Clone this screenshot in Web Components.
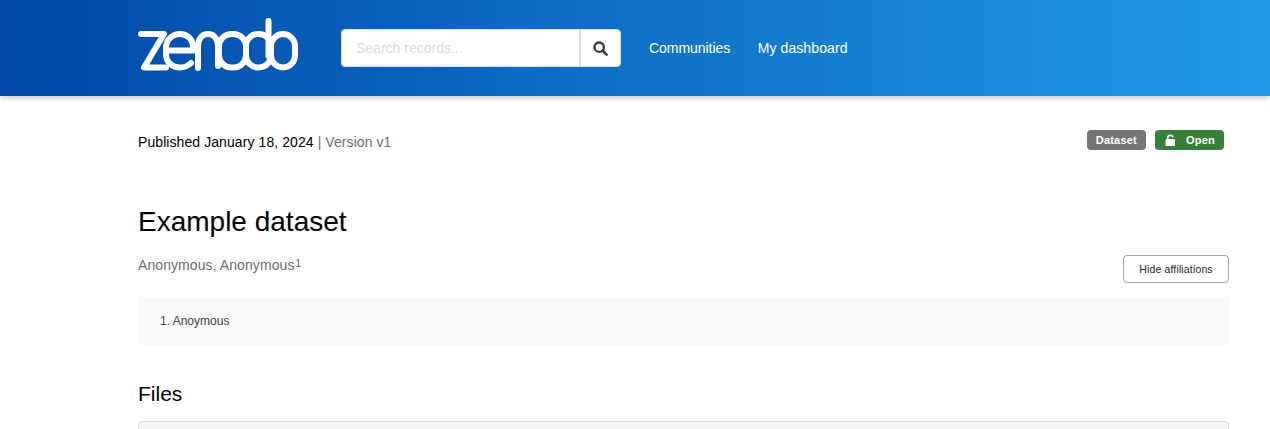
<!DOCTYPE html>
<html lang="en">
<head>
<meta charset="utf-8">
<title>Example dataset</title>
<style>
html,body{margin:0;padding:0;height:429px;overflow:hidden;background:#fff}
body{font-family:"Liberation Sans",Arial,sans-serif;color:#000;font-size:14px}
</style>
</head>
<body>
<zen-header></zen-header>
<zen-record>
  <zen-meta slot="meta" date="Published January 18, 2024" version="Version v1">
    <zen-badge tone="grey">Dataset</zen-badge>
    <zen-badge tone="green" lock>Open</zen-badge>
  </zen-meta>
  <span slot="title">Example dataset</span>
  <zen-creators slot="creators"></zen-creators>
  <span slot="files">Files</span>
</zen-record>
<script>
function def(name, css, html){
  customElements.define(name, class extends HTMLElement{
    constructor(){super();const r=this.attachShadow({mode:'open'});r.innerHTML='<style>'+css+'</style>'+(typeof html==='function'?html(this):html);}
  });
}
def('zen-logo', ':host{display:block;width:160px;height:54px}svg{display:block}',
`<svg width="160" height="54" viewBox="138 18 160 54" fill="none" stroke="#fff" stroke-width="6" stroke-linecap="round" stroke-linejoin="round" aria-label="zenodo">
<path d="M141 34H164L144 67.500H166"/>
<path d="M166 50.500H193V47C193 39 187 34 180 34C172 34 166 40 166 48V54C166 62 172 67.500 180 67.500C184 67.500 188 66 191 63"/>
<path d="M198 68V46C198 39 202 34 208 34C214 34 218 39 218 46V66"/>
<rect x="219" y="34" width="27" height="33.500" rx="12.500"/>
<rect x="246" y="34" width="25" height="33.500" rx="12"/>
<path d="M268.500 21V56"/>
<rect x="271" y="34" width="24" height="33.500" rx="12"/>
</svg>`);
def('zen-search',
`:host{display:flex;width:280px;height:38px;box-sizing:border-box;background:#fff;border:1px solid #dedede;border-radius:4px;font-size:14px}
.in{flex:1;display:flex;align-items:center;padding-left:14px;color:#dcdcdc}
.btn{width:41px;display:flex;align-items:center;justify-content:center;border-left:2px solid #dedede;box-sizing:border-box}`,
`<div class="in">Search records...</div><div class="btn"><svg width="15" height="15" viewBox="0 0 15 15" fill="none" stroke="#3d3d3d"><circle cx="6.200" cy="6.200" r="4.700" stroke-width="2.400"/><path d="M9.800 9.800L13.600 13.600" stroke-width="2.700" stroke-linecap="round"/></svg></div>`);
def('zen-header',
`:host{display:flex;align-items:center;height:96px;box-sizing:border-box;padding-left:138px;background:linear-gradient(90deg,#0047a8 0%,#1f9be6 100%);box-shadow:0 2px 5px rgba(0,0,0,.22);position:relative;color:#fff;font-size:14px}
zen-logo{align-self:flex-start;margin-top:18px}
zen-search{margin-left:43px}
nav{display:flex;gap:27.500px;margin-left:28px}
nav span:first-child{letter-spacing:-.05px}
nav span:last-child{letter-spacing:.1px}`,
`<zen-logo></zen-logo><zen-search></zen-search><nav><span>Communities</span><span>My dashboard</span></nav>`);
def('zen-badge',
`:host{display:inline-flex;align-items:center;height:20px;box-sizing:border-box;border-radius:4px;padding:0 9px;font-size:11px;font-weight:700;color:#fff;background:#767676;letter-spacing:.18px}
:host([tone=green]){background:#36803a;padding:0 9px 0 10px;letter-spacing:.25px}
svg{display:none;margin-right:10px}
:host([lock]) svg{display:block}`,
`<svg width="11" height="12" viewBox="0 0 11 12"><path d="M1 5.500H9.500V11.500H1Z" fill="#fff" stroke="#fff" stroke-linejoin="round"/><path d="M2.800 5.500V3.600C2.800 1 7.300 .6 7.900 3.200" fill="none" stroke="#fff" stroke-width="1.700"/></svg><slot></slot>`);
def('zen-meta',
`:host{display:flex;justify-content:space-between;align-items:center;height:22px;padding-right:5px;font-size:14px}
.t{letter-spacing:.08px}.v{color:#6d6d6d}.r{display:flex;gap:9px;margin-top:-4px}`,
el=>`<div class="t">${el.getAttribute('date')} <span class="v">| ${el.getAttribute('version')}</span></div><div class="r"><slot></slot></div>`);
def('zen-creators',
`:host{display:block}
.row{display:flex;justify-content:space-between;align-items:flex-start;height:41px}
.names{color:#6d6d6d;font-size:14px;line-height:20px;margin-top:-1px;letter-spacing:.08px}
sup{font-size:10px;color:#7a5560;line-height:0;vertical-align:baseline;position:relative;top:-3.500px;margin-left:1px}
button{all:unset;box-sizing:border-box;width:106px;height:28px;margin-top:-1px;border:1px solid #a8a8a8;border-radius:4px;text-align:center;line-height:26px;font-size:10.500px;color:#222;letter-spacing:.15px}
.aff{background:#f8faf9;height:48px;box-sizing:border-box;padding-left:22px;display:flex;align-items:center;font-size:12px;color:#444}`,
`<div class="row"><div class="names">Anonymous, Anonymous<sup>1</sup></div><button>Hide affiliations</button></div><div class="aff">1. Anoymous</div>`);
def('zen-record',
`:host{display:block;padding:35px 41px 0 138px}
h1{font-weight:400;font-size:28px;line-height:34px;margin:52px 0 17px}
h2{font-weight:400;font-size:21px;line-height:24px;margin:37px 0 15px}
.box{height:60px;background:#f5f5f5;border:1px solid #ddd;border-radius:4px 4px 0 0}`,
`<slot name="meta"></slot><h1><slot name="title"></slot></h1><slot name="creators"></slot><h2><slot name="files"></slot></h2><div class="box"></div>`);
</script>
</body>
</html>
